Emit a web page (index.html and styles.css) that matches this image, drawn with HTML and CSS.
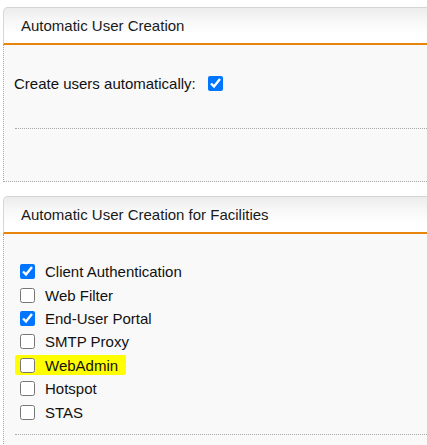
FILE: index.html
```html
<!DOCTYPE html>
<html>
<head>
<meta charset="utf-8">
<link rel="stylesheet" href="styles.css">
</head>
<body>
<div class="page">
  <section class="panel panel-first">
    <div class="panel-head">Automatic User Creation</div>
    <div class="panel-body body-first">
      <label class="field-row">
        <span class="field-label">Create users automatically:</span>
        <input type="checkbox" checked>
      </label>
      <div class="separator"></div>
    </div>
  </section>

  <section class="panel panel-second">
    <div class="panel-head">Automatic User Creation for Facilities</div>
    <div class="panel-body body-second">
      <ul class="facility-list">
        <li><label><input type="checkbox" checked><span>Client Authentication</span></label></li>
        <li><label><input type="checkbox"><span>Web Filter</span></label></li>
        <li><label><input type="checkbox" checked><span>End-User Portal</span></label></li>
        <li><label><input type="checkbox"><span>SMTP Proxy</span></label></li>
        <li class="highlighted"><label><input type="checkbox"><span>WebAdmin</span></label></li>
        <li><label><input type="checkbox"><span>Hotspot</span></label></li>
        <li><label><input type="checkbox"><span>STAS</span></label></li>
      </ul>
      <div class="separator"></div>
    </div>
  </section>
</div>
</body>
</html>
```

FILE: styles.css
```css
html, body {
  margin: 0;
  padding: 0;
  background: #ffffff;
}

body {
  font-family: "Liberation Sans", Arial, sans-serif;
  font-size: 15px;
  color: #111;
  width: 427px;
  height: 445px;
  overflow: hidden;
}

.page {
  padding-left: 3px;
  padding-top: 7px;
}

.panel {
  width: 440px;
}

.panel-second {
  margin-top: 14px;
}

.panel-head {
  height: 35px;
  line-height: 35px;
  padding-left: 17px;
  border-top: 1px solid #d4d4d4;
  border-left: 1px solid #d6d6d6;
  border-top-left-radius: 5px;
  border-bottom: 2px solid #e8830c;
  background: linear-gradient(to bottom, #ececec 0%, #f7f7f7 35%, #ffffff 75%);
  font-size: 15px;
  color: #1a1a1a;
}

.panel-body {
  background: #f9f9f9;
  border-left: 1px dotted #a8a8a8;
}

.body-first {
  height: 137px;
  border-bottom: 1px dotted #a8a8a8;
  box-sizing: border-box;
}

.field-row {
  display: flex;
  align-items: center;
  padding-left: 10px;
  padding-top: 29px;
  height: 18px;
}

.field-label {
  margin-right: 12px;
}

.field-row input {
  margin: 0;
  width: 15px;
  height: 15px;
}

.separator {
  margin-left: 11px;
  border-top: 1px dotted #a8a8a8;
}

.body-first .separator {
  margin-top: 36px;
}

.body-second {
  height: 220px;
  padding-top: 26px;
  box-sizing: border-box;
}

.facility-list {
  list-style: none;
  margin: 0;
  padding: 0 0 0 16px;
}

.facility-list li {
  height: 23.4px;
  display: flex;
  align-items: center;
}

.facility-list label {
  display: flex;
  align-items: center;
  height: 20px;
  padding-right: 6px;
}

.facility-list input {
  margin: 0 10px 0 0;
  width: 15px;
  height: 15px;
}

.highlighted label {
  background: #ffff00;
  margin-left: -5px;
  padding-left: 5px;
  padding-right: 8px;
  border-radius: 2px;
}

.body-second .separator {
  margin-top: 10px;
}
```
